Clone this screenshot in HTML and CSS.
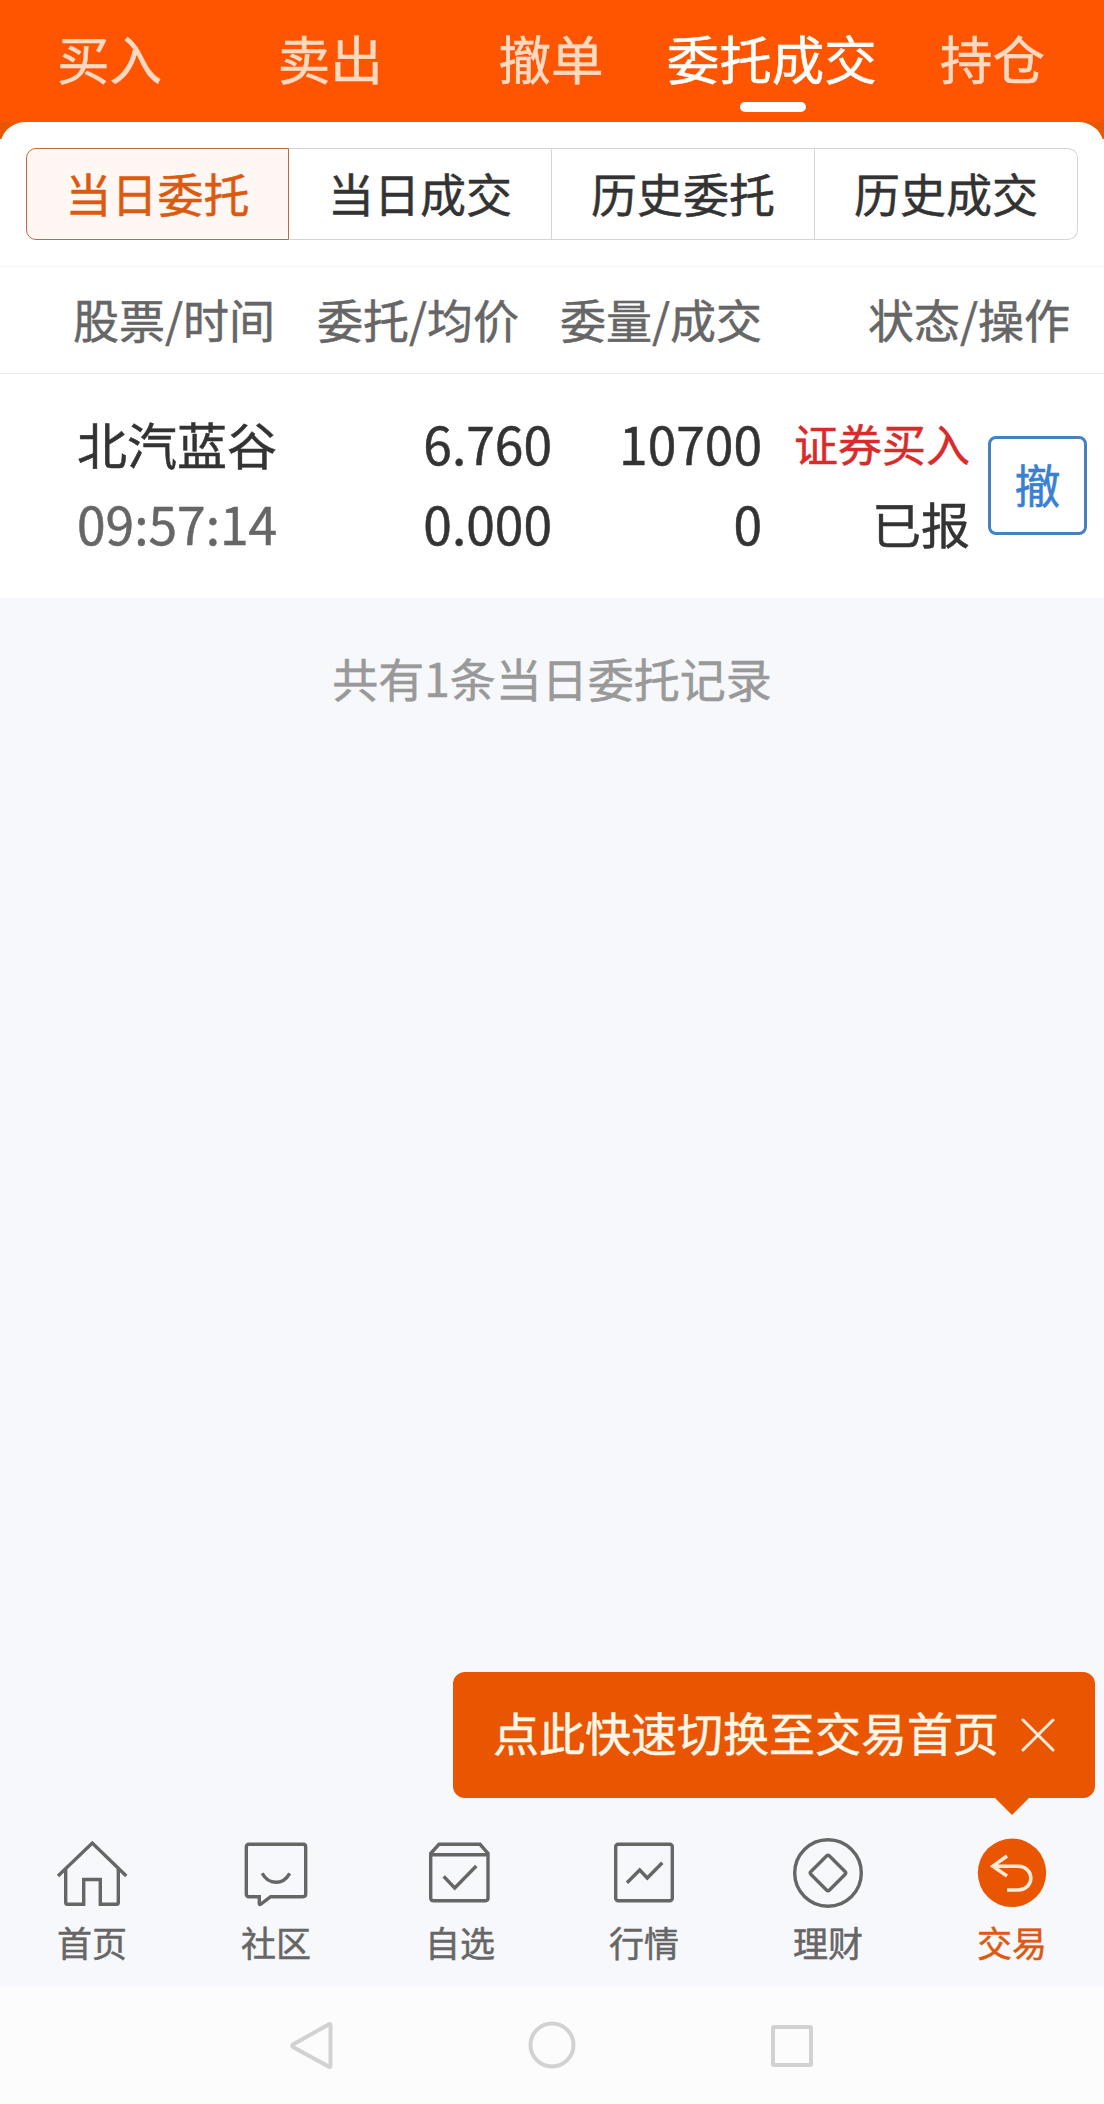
FILE: index.html
```html
<!DOCTYPE html>
<html lang="zh-CN">
<head>
  <meta charset="utf-8">
  <title>委托成交</title>
  <link rel="stylesheet" href="styles.css">
</head>
<body>

    <div class="topTabs">
        <div class="topTab">买入</div>
        <div class="topTab">卖出</div>
        <div class="topTab">撤单</div>
        <div class="topTab active">委托成交</div>
        <div class="topTab">持仓</div>
    </div>

    <div class="panelWrap">
        <div class="panel">
            <div class="segment">
                <div class="seg active">当日委托</div>
                <div class="seg">当日成交</div>
                <div class="seg">历史委托</div>
                <div class="seg">历史成交</div>
            </div>

            <div class="tableHead">
                <div>股票/时间</div>
                <div>委托/均价</div>
                <div>委量/成交</div>
                <div class="last">状态/操作</div>
            </div>

            <div class="order">
                <div class="cell">
                    <div class="name">北汽蓝谷</div>
                    <div class="time">09:57:14</div>
                </div>
                <div class="cell right">
                    <div>6.760</div>
                    <div>0.000</div>
                </div>
                <div class="cell right">
                    <div>10700</div>
                    <div>0</div>
                </div>
                <div class="cell right">
                    <div class="buy">证券买入</div>
                    <div class="state">已报</div>
                </div>
                <button class="cancel">撤</button>
            </div>
        </div>
    </div>

    <div class="content">
        <div class="total">共有1条当日委托记录</div>
    </div>

    <div class="tabBar">
        <div class="tip">
            <span>点此快速切换至交易首页</span>
            <svg class="close" viewBox="0 0 34 34"><path d="M2 2L32 32M32 2L2 32"/></svg>
        </div>
        <div class="tabItem">
            <svg viewBox="0 0 74 74">
                <path d="M3 40L37.3 7L71.3 40"/>
                <path d="M10.7 33V66.5Q10.7 68.3 12.5 68.3H28.7V43.5H45.3V68.3H61.5Q63.3 68.3 63.3 66.5V33"/>
            </svg>
            <div>首页</div>
        </div>
        <div class="tabItem">
            <svg viewBox="0 0 74 74">
                <path d="M10 8.3H64Q66.7 8.3 66.7 11V58Q66.7 60.7 64 60.7H31.7L21.5 68.3Q20.3 69 20.3 67.5V60.7H10Q7.3 60.7 7.3 58V11Q7.3 8.3 10 8.3Z"/>
                <path d="M23.2 37.3Q28 46.3 36.8 46.3T50.7 37.3"/>
            </svg>
            <div>社区</div>
        </div>
        <div class="tabItem">
            <svg viewBox="0 0 74 74">
                <path d="M7.7 17.5L16 8.3H57L65 17.5V62Q65 64.7 62.3 64.7H10.4Q7.7 64.7 7.7 62ZM7.7 18.7H65"/>
                <path d="M20.7 40.3L31.7 52L53.3 30"/>
            </svg>
            <div>自选</div>
        </div>
        <div class="tabItem">
            <svg viewBox="0 0 74 74">
                <rect x="8.7" y="8.3" width="56.6" height="56.4" rx="2.5"/>
                <path d="M20 46.7L32.7 34L40.3 42L55.3 26.7"/>
            </svg>
            <div>行情</div>
        </div>
        <div class="tabItem">
            <svg viewBox="0 0 74 74">
                <circle cx="37" cy="37" r="33.3"/>
                <path d="M35.5 20Q37 18.5 38.5 20L54 35.5Q55.5 37 54 38.5L38.5 54Q37 55.5 35.5 54L20 38.5Q18.5 37 20 35.5Z"/>
            </svg>
            <div>理财</div>
        </div>
        <div class="tabItem active">
            <svg viewBox="0 0 74 74">
                <circle cx="37" cy="36.8" r="34.2"/>
                <path d="M32 20L17.8 30.2L32 40M17.8 30.2H43.5A12.4 11.9 0 0 1 43.5 54H32"/>
            </svg>
            <div>交易</div>
        </div>
    </div>

    <!-- system keys -->
    <div class="sysNav">
        <svg viewBox="0 0 50 50"><path d="M41.5 4.5Q43.5 3 43.5 5.5V45.5Q43.5 48 41.5 46.5L6 27Q4.5 25.7 6 24.5Z"/></svg>
        <svg viewBox="0 0 50 50"><circle cx="25" cy="25" r="21.5"/></svg>
        <svg viewBox="0 0 50 50"><rect x="6" y="7" width="38" height="38" rx="1"/></svg>
    </div>

</body>
</html>
```

FILE: styles.css
```css
* {
    box-sizing: border-box;
}

body {
    margin: 0;
    height: 2104px;
    display: flex;
    flex-direction: column;
    background: #f7f8fb;
    color: #333;
    font-family: "Noto Sans CJK SC", sans-serif;
    font-size: 46px;
    -webkit-text-stroke: 0.5px;
}

.topTabs {
    display: flex;
    height: 122px;
    background: #ff5500;
}

.topTab {
    position: relative;
    flex: 1;
    text-align: center;
    font-size: 52.5px;
    line-height: 115px;
    color: #ffd9c2;
    white-space: nowrap;
    text-indent: -2px;
}

.topTab.active {
    color: #fff;
}

.topTab.active::after {
    content: "";
    position: absolute;
    left: 50%;
    bottom: 10px;
    width: 66px;
    height: 10px;
    margin-left: -33px;
    border-radius: 5px;
    background: #fff;
}

.panelWrap {
    background: linear-gradient(#e95501 17px, #fff 17px);
}

.panel {
    background: #fff;
    border-radius: 25px 25px 0 0;
    padding-top: 26px;
}

.segment {
    display: flex;
    height: 92px;
    margin: 0 26px;
}

.seg {
    width: 263px;
    border: 1px solid #d3d6d9;
    border-left-width: 0;
    text-align: center;
    line-height: 86px;
}

.seg.active {
    border: 1px solid #bf6a3a;
    border-radius: 10px 0 0 10px;
    background: #fff7f3;
    color: #dc5a10;
}

.seg:last-child {
    border-radius: 0 10px 10px 0;
}

.tableHead {
    display: grid;
    grid-template-columns: 244px 243px 243px 1fr;
    height: 108px;
    margin-top: 26px;
    padding: 0 34px 0 73px;
    border-top: 1px solid #f6f6f6;
    border-bottom: 1px solid #eaeaea;
    line-height: 102px;
    color: #666;
}

.tableHead .last {
    text-align: right;
}

.order {
    display: grid;
    grid-template-columns: 240px 235px 210px 208px 99px;
    height: 224px;
    padding: 29px 17px 0 77px;
    line-height: 80px;
    font-size: 51.5px;
}

.cell {
    white-space: nowrap;
}

.right {
    text-align: right;
}

.name {
    font-size: 50px;
}

.time {
    color: #666;
}

.buy {
    font-size: 44px;
    color: #d92b2b;
}

.state {
    font-size: 49px;
}

.cancel {
    width: 99px;
    height: 99px;
    margin: 33px 0 0 18px;
    padding: 0 0 5px;
    border: 3px solid #4580c2;
    border-radius: 8px;
    background: #fff;
    color: #3a80d2;
    font: inherit;
    font-size: 46px;
    line-height: 86px;
}

.content {
    flex: 1;
    padding-top: 48px;
}

.total {
    text-align: center;
    line-height: 63px;
    color: #999;
}

.tabBar {
    position: relative;
    display: flex;
    height: 151px;
    background: #f7f8fb;
    color: #666;
    font-size: 35px;
}

.tabItem {
    flex: 1;
    text-align: center;
    line-height: 63px;
}

.tabItem svg {
    display: block;
    width: 74px;
    height: 74px;
    margin: 0 auto;
    fill: none;
    stroke: #666;
    stroke-width: 3.4;
}

.tabItem.active {
    color: #dc5a10;
}

.tabItem.active circle {
    fill: #e95501;
    stroke: none;
}

.tabItem.active path {
    stroke: #ffeadb;
    stroke-width: 3.5;
}

.tip {
    position: absolute;
    right: 9px;
    bottom: 189px;
    display: flex;
    align-items: center;
    width: 642px;
    height: 126px;
    padding-left: 40px;
    border-radius: 12px;
    background: #e95501;
    color: #fff6e8;
    font-size: 46px;
    line-height: 120px;
}

.tip span {
    margin-top: -8px;
}

.tip::after {
    content: "";
    position: absolute;
    top: 126px;
    right: 66px;
    border: 17px solid transparent;
    border-top-color: #e95501;
    border-bottom-width: 0;
}

.close {
    width: 34px;
    height: 34px;
    margin-left: 22px;
    fill: none;
    stroke: #ffeadb;
    stroke-width: 3;
    stroke-linecap: round;
}

.sysNav {
    display: flex;
    justify-content: center;
    gap: 190px;
    height: 117px;
    padding-top: 33px;
    background: #fcfcfc;
}

.sysNav svg {
    width: 50px;
    height: 50px;
    fill: none;
    stroke: #d2d2d2;
    stroke-width: 4;
}
```
